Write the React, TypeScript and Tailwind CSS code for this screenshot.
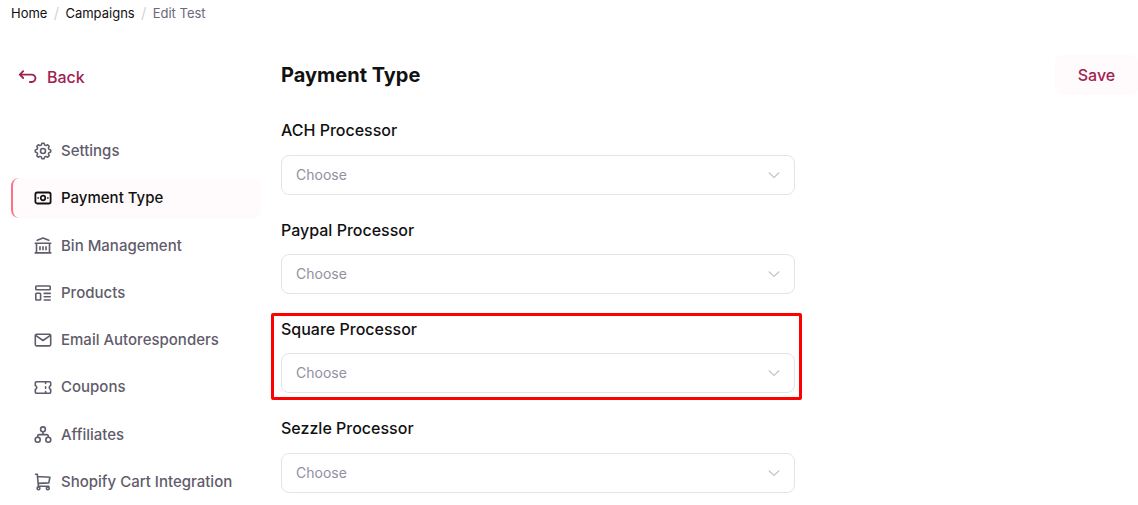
import type { ReactNode } from "react";

function Icon({ children }: { children: ReactNode }) {
  return (
    <svg
      className="size-[18px] shrink-0"
      viewBox="0 0 18 18"
      fill="none"
      stroke="currentColor"
      strokeWidth="1.6"
      strokeLinecap="round"
      strokeLinejoin="round"
    >
      {children}
    </svg>
  );
}

const items: { label: string; icon: ReactNode; active?: boolean }[] = [
  {
    label: "Settings",
    icon: (
      <Icon>
        <path
          strokeWidth="1.5"
          transform="translate(9 9)"
          d="M-1.09-7.72H1.09L1.6-5.99 3.1-5.37 4.69-6.23 6.23-4.69 5.37-3.1 5.99-1.6 7.72-1.09V1.09L5.99 1.6 5.37 3.1 6.23 4.69 4.69 6.23 3.1 5.37 1.6 5.99 1.09 7.72H-1.09L-1.6 5.99-3.1 5.37-4.69 6.23-6.23 4.69-5.37 3.1-5.99 1.6-7.72 1.09V-1.09L-5.99-1.6-5.37-3.1-6.23-4.69-4.69-6.23-3.1-5.37-1.6-5.99Z"
        />
        <circle cx="9" cy="9" r="2.5" />
      </Icon>
    ),
  },
  {
    label: "Payment Type",
    active: true,
    icon: (
      <Icon>
        <rect x="1.4" y="3.5" width="15.2" height="11" rx="1.8" strokeWidth="1.8" />
        <circle cx="9" cy="9" r="2.3" strokeWidth="1.7" />
        <path d="M3.9 9h.5M13.6 9h.5" strokeWidth="1.4" />
      </Icon>
    ),
  },
  {
    label: "Bin Management",
    icon: (
      <Icon>
        <path d="M3.2 3.3 9 1l5.8 2.3M1.2 6.2h15.6M2.5 6.2v9.7M15.5 6.2v9.7M1.2 15.9h15.6M6 9.7v3M9 9.7v3M12 9.7v3" />
      </Icon>
    ),
  },
  {
    label: "Products",
    icon: (
      <Icon>
        <rect x="1.8" y="2" width="14.4" height="3.8" rx=".7" />
        <rect x="1.8" y="9.3" width="4.8" height="6.7" rx=".7" />
        <path d="M10.2 9.4h6M10.2 12.7h6M10.2 16h6" />
      </Icon>
    ),
  },
  {
    label: "Email Autoresponders",
    icon: (
      <Icon>
        <rect x="1.3" y="3.3" width="15.4" height="11.6" rx="1.3" />
        <path d="m2 4.6 7 4.9 7-4.9" />
      </Icon>
    ),
  },
  {
    label: "Coupons",
    icon: (
      <Icon>
        <path d="M2.5 2.7h13a1.2 1.2 0 0 1 1.2 1.2v2.5a2.25 2.25 0 0 0 0 4.2v2.5a1.2 1.2 0 0 1-1.2 1.2h-13a1.2 1.2 0 0 1-1.2-1.2v-2.5a2.25 2.25 0 0 0 0-4.2V3.9a1.2 1.2 0 0 1 1.2-1.2Z" />
        <path d="M11.6 3.2v1.3M11.6 7.8v1.5M11.6 12.6v1.3" />
      </Icon>
    ),
  },
  {
    label: "Affiliates",
    icon: (
      <Icon>
        <circle cx="9" cy="3.3" r="2.4" />
        <circle cx="3.7" cy="13.7" r="2.5" />
        <circle cx="14.3" cy="13.7" r="2.5" />
        <path d="M9 5.8v2.8M3.7 11.2v-1a1.6 1.6 0 0 1 1.6-1.6h7.4a1.6 1.6 0 0 1 1.6 1.6v1" />
      </Icon>
    ),
  },
  {
    label: "Shopify Cart Integration",
    icon: (
      <Icon>
        <path d="M1.6 1.2h1.7l1.1 12h10.4M3.6 3.5l12.3.8-1.1 5.6-10.6.5" />
        <circle cx="4.5" cy="15.3" r="1.4" />
        <circle cx="13.8" cy="15.3" r="1.4" />
      </Icon>
    ),
  },
];

function Field({ label, highlighted }: { label: string; highlighted?: boolean }) {
  return (
    <div className="relative h-[99.3px] w-[514px]">
      <div className="text-[16px] leading-5 font-medium text-[#111111]">{label}</div>
      <button className="mt-[14.35px] flex h-10 w-full items-center justify-between rounded-lg border border-[#e4e4e7] bg-white px-[14px] text-left text-[14px] text-[#93909f]">
        <span className="pb-px">Choose</span>
        <svg className="h-3 w-3" viewBox="0 0 12 12" fill="none" stroke="#c4c4c8" strokeWidth="1.1">
          <path d="m.8 3.5 5.2 5 5.2-5" />
        </svg>
      </button>
      {highlighted && (
        <div className="pointer-events-none absolute top-[-6px] left-[-10px] h-[87px] w-[531px] rounded-[2px] border-3 border-[#ff0000]" />
      )}
    </div>
  );
}

export default function App() {
  return (
    <div className="h-[505px] overflow-hidden bg-white font-['Inter',sans-serif]">
      <nav className="flex h-[55px] items-start pt-[3px] pl-[11px] text-[13px] leading-5 text-[#111111]">
        <span>Home</span>
        <span className="w-[18px] text-center text-[15px] text-[#d4d4da]">/</span>
        <span>Campaigns</span>
        <span className="w-[18px] text-center text-[15px] text-[#d4d4da]">/</span>
        <span className="text-[#6b6879]">Edit Test</span>
      </nav>
      <div className="flex">
        <aside className="ml-[11px] w-[250px] shrink-0">
          <button className="mt-[12px] ml-[7px] flex h-5 items-center gap-[10px] text-[16px] leading-5 font-medium text-[#9f2351]">
            <svg className="h-[18px] w-[19px]" viewBox="0 0 19 18" fill="none" stroke="currentColor" strokeWidth="1.9" strokeLinecap="round" strokeLinejoin="round">
              <path d="M5.2 3.2 1.8 6.6 5.2 10M2 6.6h11.7a3.7 3.7 0 0 1 0 7.4h-1.8" />
            </svg>
            <span>Back</span>
          </button>
          <ul className="mt-[44px] flex flex-col gap-[7.35px]">
            {items.map((item) => (
              <li
                key={item.label}
                className={
                  item.active
                    ? "flex h-10 items-center gap-[9px] rounded-lg border-l-2 border-[#fb7185] bg-[#fffafb] pl-[21px] text-[15px] font-medium text-[#111111]"
                    : "flex h-10 items-center gap-[9px] rounded-lg border-l-2 border-transparent pl-[21px] text-[15px] font-medium text-[#5f5c6b]"
                }
              >
                {item.icon}
                <span className={item.label === "Bin Management" ? "pt-px" : undefined}>{item.label}</span>
              </li>
            ))}
          </ul>
        </aside>
        <main className="ml-5 min-w-0 flex-1">
          <header className="flex h-10 items-center justify-between">
            <h1 className="text-[20px] font-bold text-[#111111]">Payment Type</h1>
            <button className="h-10 w-[83px] rounded-lg bg-[#fffafb] text-[16px] font-medium text-[#9f2351]">Save</button>
          </header>
          <div className="mt-[25.4px]">
            <Field label="ACH Processor" />
            <Field label="Paypal Processor" />
            <Field label="Square Processor" highlighted />
            <Field label="Sezzle Processor" />
          </div>
        </main>
      </div>
    </div>
  );
}
